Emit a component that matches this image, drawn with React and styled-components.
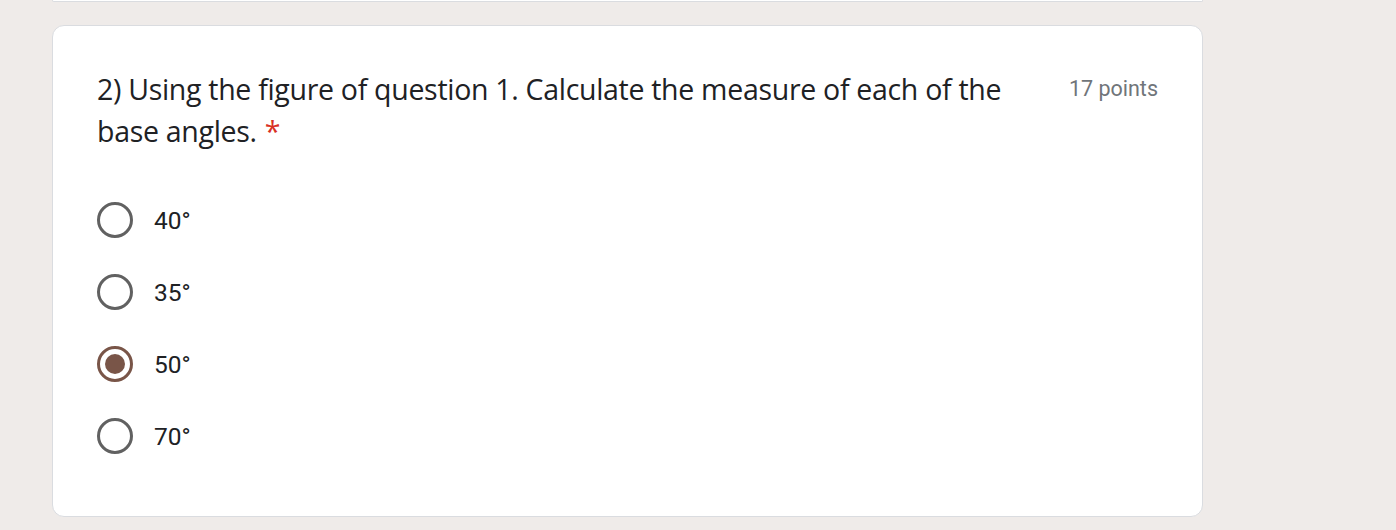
import React, { useState } from 'react'
import styled, { createGlobalStyle } from 'styled-components'

const Global = createGlobalStyle`
  html, body {
    margin: 0;
    padding: 0;
    background: #efebe9;
  }
  body {
    font-family: Roboto, "Liberation Sans", Arial, sans-serif;
    color: #202124;
  }
`;

const Page = styled.div`
    width: 1396px;
    height: 530px;
    overflow: hidden;
    display: flex;
    flex-direction: column;
    gap: 23px;
    padding-left: 52px;
    box-sizing: border-box;
`;

const PrevCard = styled.div`
    width: 1151px;
    height: 2px;
    box-sizing: border-box;
    background: #fff;
    border: 1px solid #dadce0;
    border-top: none;
    border-radius: 0 0 10px 10px;
`;

const Card = styled.div`
    width: 1151px;
    background: #fff;
    border: 1px solid #dadce0;
    border-radius: 12px;
    box-sizing: border-box;
    padding: 42px 44px 44px 44px;
`;

const Header = styled.div`
    display: flex;
    justify-content: space-between;
    align-items: flex-start;
    gap: 30px;
`;

const Title = styled.div`
    font-family: "Open Sans", sans-serif;
    font-size: 28.5px;
    line-height: 42px;
    color: #202124;
    max-width: 940px;
    letter-spacing: -0.3px;
`;

const Star = styled.span`
    color: #d93025;
    margin-left: 8px;
`;

const Points = styled.div`
    font-size: 21.5px;
    line-height: 42px;
    color: #70757a;
    white-space: nowrap;
`;

const Options = styled.div`
    display: flex;
    flex-direction: column;
    margin-top: 32px;
`;

const Option = styled.label`
    display: flex;
    align-items: center;
    gap: 21px;
    height: 72px;
    cursor: pointer;
`;

const Radio = styled.span`
    width: 36px;
    height: 36px;
    border-radius: 50%;
    box-sizing: border-box;
    border: 3px solid ${p => (p.checked ? '#795548' : '#616161')};
    display: flex;
    align-items: center;
    justify-content: center;
    &::after {
        content: '';
        width: 20px;
        height: 20px;
        border-radius: 50%;
        background: #795548;
        display: ${p => (p.checked ? 'block' : 'none')};
    }
`;

const OptionText = styled.span`
    font-size: 24.5px;
    color: #202124;
`;

const answers = ['40°', '35°', '50°', '70°'];

export default function App() {
    const [selected, setSelected] = useState(2);

    return (
        <>
            <Global />
            <Page>
                <PrevCard />
                <Card>
                    <Header>
                        <Title>
                            2) Using the figure of question 1. Calculate the measure of each of the base angles.<Star>*</Star>
                        </Title>
                        <Points>17 points</Points>
                    </Header>
                    <Options>
                        {answers.map((a, i) => (
                            <Option key={i} onClick={() => setSelected(i)}>
                                <Radio checked={selected === i} />
                                <OptionText>{a}</OptionText>
                            </Option>
                        ))}
                    </Options>
                </Card>
            </Page>
        </>
    )
}
